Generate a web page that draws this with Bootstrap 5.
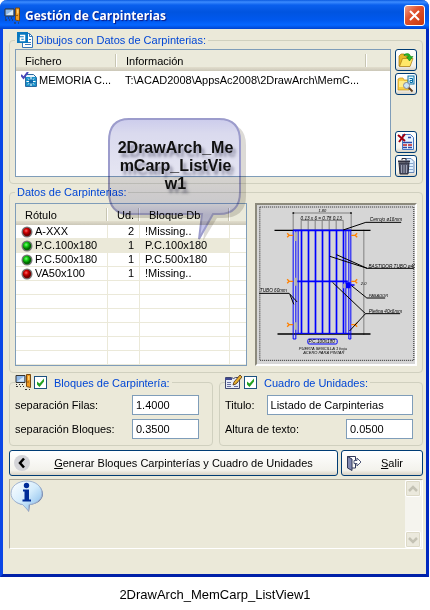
<!DOCTYPE html>
<html lang="es">
<head>
<meta charset="utf-8">
<meta name="viewport" content="width=device-width, initial-scale=1">
<title>Gestión de Carpinterias</title>
<link href="https://cdn.jsdelivr.net/npm/bootstrap@5.3.0/dist/css/bootstrap.min.css" rel="stylesheet">
<style>
  body { font-family: "Liberation Sans", Arial, sans-serif; font-size: 11px; line-height: 14px; color: #000; background: #fff; }
  svg { display: block; flex: none; }
  .win { margin-right: 1px; border: 3px solid #0a46e6; border-top: 0; border-bottom-color: #0020a8; border-right-color: #0028c0; border-radius: 7px 7px 0 0; background: #ebe9d9; }
  .titlebar { height: 29px; margin: 0 -3px; padding: 2px 4px 0 4px; border-radius: 7px 7px 0 0; background: linear-gradient(#0a5ae0 0, #3c8cff 2px, #0a60ee 5px, #0054e0 12px, #0058ee 20px, #0566ff 25px, #0043cf 29px); }
  .titlebar h1 { font: bold 12px/20px "Open Sans", "Noto Sans", sans-serif; color: #fff; text-shadow: 1px 1px 1px #0a1883; }
  .btn-x { width: 21px; height: 21px; padding: 0; border: 1px solid #fff; border-radius: 3px; background: linear-gradient(135deg, #f0a088, #e0522e 40%, #c8380c); }
  .content { padding: 2px 3px 25px 6px; }
  .group { min-width: 0; border: 1px solid #d0d0bf; border-radius: 4px; padding: 0 5px 6px 5px; }
  .group + .group { margin-top: 1px; }
  .group > legend { font-size: 11px; line-height: 14px; color: #0046d5; margin: 0; padding: 0 2px; gap: 3px; }
  .group > .opt { padding-left: 0; gap: 2px; margin-bottom: 4px; }
  .opt label { margin-left: 5px; }
  .group > .plain { margin-bottom: 4px; }
  .list { flex: 1 1 0; min-width: 0; overflow: hidden; border: 1px solid #7f9db9; background: #fff; }
  .list table { width: 100%; table-layout: fixed; border-collapse: separate; border-spacing: 0; }
  .list th { height: 21px; padding: 0 9px; font-weight: normal; background: linear-gradient(#ebeadb 0 17px, #e2decd 17px, #cbc7b8 21px); white-space: nowrap; position: relative; }
  .list th:not(:last-child)::after { content: ""; position: absolute; right: 0; top: 4px; height: 13px; border-left: 1px solid #c7c5b2; border-right: 1px solid #fff; }
  .list td { line-height: 13px; height: 14px; padding: 0 5px; white-space: nowrap; }
  .files { min-height: 128px; }
  .files td { height: 18px; }
  .cell { display: flex; align-items: center; gap: 2px; }
  .grid td { border-bottom: 1px solid #ebe9d9; border-right: 1px solid #ebe9d9; }
  .grid td:last-child { border-right: 0; }
  .grid .picked td:not(:last-child) { background: #ebe9d9; }
  .xp { border: 1px solid #003c74; border-radius: 3px; padding: 0; background: linear-gradient(#fff, #f3f2ec 80%, #d8d2c4); color: #000; height: 26px; }
  .xp.tool { width: 22px; height: 22px; display: flex; align-items: center; justify-content: center; }
  .tools { gap: 2px; padding-right: 0; }
  .salir { width: 82px; }
  .actions { gap: 3px; }
  .field { height: 20px; border: 1px solid #7f9db9; border-radius: 0; padding: 0 3px; line-height: 14px; background: #fff; color: #000; min-width: 0; width: 100%; }
  .field.num { width: 67px; }
  .line { height: 20px; }
  .pairs { --bs-gutter-x: 6px; margin-top: 1px; }
  .pairs > .col { min-width: 0; }
  .tick { appearance: none; width: 13px; height: 13px; margin: 0; border: 1px solid #1c5180; background: #fff; }
  .tick:checked { background: #fff url("data:image/svg+xml,%3Csvg xmlns='http://www.w3.org/2000/svg' viewBox='0 0 11 11'%3E%3Cpath d='M2 4.5v3l2.500 2.500L9 4.500v-3L4.500 6.500z' fill='%2321a121'/%3E%3C/svg%3E"); }
  .preview { border: 2px solid; border-color: #8c8a7c #fff #fff #8c8a7c; background: #d6d6d6; flex: 0 0 162px; height: 163px; }
  .memo { height: 70px; margin-top: 3px; border: 1px solid; border-color: #aca899 #fff #fff #aca899; }
  .scroller { width: 17px; background: #f5f4ee; }
  .scroller button { width: 16px; height: 17px; padding: 0; border: 1px solid #fff; border-radius: 2px; background: #ebe9dd; box-shadow: 0 0 0 1px #dddac8 inset; }
  .balloon { left: 105px; top: 115px; width: 142px; height: 132px; pointer-events: none; mix-blend-mode: multiply; }
  .balloon p { left: 2px; right: 9px; top: 24px; font-size: 16px; line-height: 18px; color: #111; text-shadow: 3px 4px 3px rgba(60,60,90,.5); }
  .caption-line { font-size: 13px; line-height: 16px; margin-top: 10px; }
</style>
</head>
<body>
<svg width="0" height="0" class="position-absolute" aria-hidden="true">
  <defs>
    <radialGradient id="gr" cx=".4" cy=".35"><stop offset="0" stop-color="#f66"/><stop offset=".5" stop-color="#d00000"/><stop offset="1" stop-color="#700"/></radialGradient>
    <radialGradient id="gg" cx=".4" cy=".35"><stop offset="0" stop-color="#7f7"/><stop offset=".5" stop-color="#10c810"/><stop offset="1" stop-color="#060"/></radialGradient>
    <linearGradient id="bal" x1="0" y1="0" x2="0" y2="1"><stop offset="0" stop-color="#ccccec"/><stop offset=".12" stop-color="#dadaee"/><stop offset=".5" stop-color="#e6e6f2"/><stop offset=".7" stop-color="#dcdcf0"/><stop offset=".8" stop-color="#c0c0e4"/><stop offset="1" stop-color="#c8c8f0"/></linearGradient>
    <linearGradient id="bub" x1="0" y1="0" x2="1" y2="1"><stop offset="0" stop-color="#fff"/><stop offset=".5" stop-color="#d4ecfc"/><stop offset="1" stop-color="#7ab4e8"/></linearGradient>
    <symbol id="red" viewBox="0 0 12 12"><circle cx="6" cy="6" r="5.500" fill="#777"/><circle cx="6" cy="6" r="4.200" fill="url(#gr)"/></symbol>
    <symbol id="green" viewBox="0 0 12 12"><circle cx="6" cy="6" r="5.500" fill="#777"/><circle cx="6" cy="6" r="4.200" fill="url(#gg)"/></symbol>
    <symbol id="door" viewBox="0 0 17 17">
      <path d="M1 1.500h9v7H1z" fill="#8fb8e8" stroke="#333"/><path d="M2 7.500l7-5v5z" fill="#d4e8fa"/>
      <path d="M11.500 .5h4v13l-4-1z" fill="#f09a20" stroke="#7a4a10"/><path d="M13 2h1.500v4H13z" fill="#ffd070"/><path d="M12.500 8h1" stroke="#402000"/>
      <path d="M1 10.500h1m2 0h1m2 0h1M1 12.500h2m2 0h1m2 0h1M10 15.500h2m2 0h1" stroke="#333"/>
    </symbol>
  </defs>
</svg>

<main class="win position-relative">
  <header class="titlebar d-flex align-items-center">
    <svg width="17" height="18"><use href="#door"/></svg>
    <h1 class="m-0 ms-1 flex-grow-1 text-nowrap">Gestión de Carpinterias</h1>
    <button type="button" class="btn-x d-flex align-items-center justify-content-center" aria-label="Cerrar">
      <svg width="13" height="13" viewBox="0 0 13 13"><path d="M2 2l9 9M11 2l-9 9" stroke="#fff" stroke-width="2"/></svg>
    </button>
  </header>

  <div class="content">
    <fieldset class="group">
      <legend class="float-none w-auto d-flex align-items-center">
        <svg width="16" height="18" viewBox="0 0 16 18"><path d="M5.500 2.500h7l3 3v11h-10z" fill="#fff" stroke="#3878b8"/><path d="M12.500 2.500v3h3M8 13.500h6M8 11.500h6M12 8.500h2" stroke="#3878b8" fill="none"/><rect x="0" y="1" width="11" height="11" fill="#0878c0"/><path d="M3 4.500h4.500v5H3.500v-2.500H7" fill="none" stroke="#fff" stroke-width="1.500"/></svg>
        <span>Dibujos con Datos de Carpinterias:</span>
      </legend>
      <div class="d-flex gap-1">
        <div class="list files">
          <table>
            <colgroup><col style="width:101px"><col style="width:250px"><col></colgroup>
            <thead><tr><th scope="col">Fichero</th><th scope="col">Información</th><th></th></tr></thead>
            <tbody><tr>
              <td><span class="cell">
                <svg width="16" height="16" viewBox="0 0 16 16"><path d="M4.500 2.500h8l3 3v9h-11z" fill="#e8f4fc" stroke="#2868a0"/><rect x="5" y="5" width="10" height="9" fill="#1890c8"/><path d="M10 5v9M5.500 9.500h9M7 6.500l6 6M13 6.500l-6 6" stroke="#fff"/><rect x="8" y="7.500" width="4" height="4" fill="#1068a8"/><path d="M0 3l2.500 3L7 0" fill="none" stroke="#4848b8" stroke-width="2"/></svg>
                <span>MEMORIA C...</span></span></td>
              <td colspan="2" class="ps-2">T:\ACAD2008\AppsAc2008\2DrawArch\MemC...</td>
            </tr></tbody>
          </table>
        </div>
        <div class="tools d-flex flex-column">
          <button type="button" class="xp tool" aria-label="Abrir">
            <svg width="16" height="16" viewBox="0 0 16 16"><path d="M1 14V4l2-2h3l1 2h5v10z" fill="#e8b828" stroke="#a87810" stroke-width=".7"/><path d="M1.500 14.500l3-8H15l-3 8z" fill="#ffe868" stroke="#a87810" stroke-width=".7"/><path d="M6 2.500c4-2 6-.5 6.500 2H15L11.500 9 8.500 5h2c-.5-1.500-2-2-4.500-1.500z" fill="#28b828" stroke="#087808" stroke-width=".5"/></svg>
          </button>
          <button type="button" class="xp tool" aria-label="Buscar">
            <svg width="18" height="18" viewBox="0 0 18 18"><path d="M1 15V4l2-1h3l1 2h5v10z" fill="#f8d048" stroke="#c89018" stroke-width=".7"/><path d="M2 6h8v6H2z" fill="#ffec88"/><rect x="11" y="1" width="6" height="8" fill="#e8f8ff" stroke="#0870a8"/><path d="M12.500 3.500h3v4h-2.500v-2h2" fill="none" stroke="#0870a8"/><path d="M11.500 12.500l4 4" stroke="#604020" stroke-width="2"/><circle cx="9.500" cy="10.500" r="3" fill="#c8e4f8" stroke="#889"/></svg>
          </button>
          <button type="button" class="xp tool mt-auto" aria-label="Quitar">
            <svg width="18" height="18" viewBox="0 0 18 18"><path d="M5.500 1.500h8l3 3v12h-11z" fill="#e8f4ff" stroke="#4878c0"/><path d="M11 4.500h3M6 9.500h9M6 14.500h4m1 0h4" stroke="#2848a8" stroke-width="1.500"/><path d="M6 12h4m1 0h4" stroke="#c02020" stroke-width="1.500"/><path d="M1 2l7 6M8 1L2 9" stroke="#a00010" stroke-width="2"/></svg>
          </button>
          <button type="button" class="xp tool" aria-label="Vaciar">
            <svg width="18" height="18" viewBox="0 0 18 18"><path d="M9 1.500h5l3 3v11H9z" fill="#e0f0ff" stroke="#6888b8"/><path d="M12 6.500h4M12 9.500h4M12 12.500h4" stroke="#88a8d0"/><path d="M2 6h10l-1 11H3z" fill="#505468" stroke="#282838"/><path d="M4.500 8v8M7 8v8M9.500 8v8" stroke="#a0a4b8"/><path d="M1 4.500h12" stroke="#303040" stroke-width="2"/><path d="M5 3V1.500h4V3" stroke="#303040" fill="none"/></svg>
          </button>
        </div>
      </div>
    </fieldset>

    <fieldset class="group">
      <legend class="plain float-none w-auto">Datos de Carpinterias:</legend>
      <div class="d-flex gap-2">
        <div class="list grid">
          <table>
            <colgroup><col style="width:92px"><col style="width:32px"><col style="width:90px"><col></colgroup>
            <thead><tr><th scope="col">Rótulo</th><th scope="col" class="text-end pe-2">Ud.</th><th scope="col">Bloque Db</th><th></th></tr></thead>
            <tbody>
              <tr><td><span class="cell"><svg width="12" height="12"><use href="#red"/></svg><span>A-XXX</span></span></td><td class="text-end">2</td><td>!Missing..</td><td></td></tr>
              <tr class="picked"><td><span class="cell"><svg width="12" height="12"><use href="#green"/></svg><span>P.C.100x180</span></span></td><td class="text-end">1</td><td>P.C.100x180</td><td></td></tr>
              <tr><td><span class="cell"><svg width="12" height="12"><use href="#green"/></svg><span>P.C.500x180</span></span></td><td class="text-end">1</td><td>P.C.500x180</td><td></td></tr>
              <tr><td><span class="cell"><svg width="12" height="12"><use href="#red"/></svg><span>VA50x100</span></span></td><td class="text-end">1</td><td>!Missing..</td><td></td></tr>
              <tr><td></td><td></td><td></td><td></td></tr>
              <tr><td></td><td></td><td></td><td></td></tr>
              <tr><td></td><td></td><td></td><td></td></tr>
              <tr><td></td><td></td><td></td><td></td></tr>
              <tr><td></td><td></td><td></td><td></td></tr>
              <tr><td></td><td></td><td></td><td></td></tr>
            </tbody>
          </table>
        </div>
        <div class="preview">
          <svg width="100%" height="100%" viewBox="21 16 471 477" font-family="Liberation Sans, sans-serif" font-style="italic" font-size="14">
            <rect x="28" y="22" width="462" height="460" fill="none" stroke="#222" stroke-width="3" stroke-dasharray="3 3"/>
            <path d="M128 92V40h174v50M152 92V62h126v30M173 62v28M194 62v28M215 62v28M236 62v28M257 62v28M340 90v316" fill="none" stroke="#808080" stroke-width="3"/>
            <path d="M72 92h288M81 403h279M126 40h5M299 40h5M336 92h8M336 403h8" stroke="#000" stroke-width="4"/>
            <path d="M128 92v326h8V92M143 92v310M286 92v310M295 92v326h6V92M138 401h160" fill="none" stroke="#00f" stroke-width="3"/>
            <path d="M153 92v310M174 92v310M195 92v310M216 92v310M237 92v310M258 92v310M279 92v310M140 245h152M128 92h174" stroke="#00f" stroke-width="5"/>
            <path d="M136 98v26M136 234v24M136 368v22M282 252v14" stroke="#b0b0b0" stroke-width="8"/>
            <path d="M286 248h14v6h12v4h-12v8h-14z" fill="#00f"/>
            <g fill="none" stroke="#ff8000" stroke-width="4"><path id="an" d="M110 101l6 6-6 6M114 107h14"/><use href="#an" y="138"/><use href="#an" y="268"/><path id="bn" d="M320 101l-6 6 6 6M316 107h-14"/><use href="#bn" y="138"/><use href="#bn" y="268"/></g>
            <path d="M278 91l68-23h106M238 170l112 36h140M258 165l92 41M26 281h90l24 26M118 284l12 30M303 258l46 37h55M246 248l99 94h104M345 342l-48 52" fill="none" stroke="#000" stroke-width="3"/>
            <rect x="172" y="418" width="88" height="15" rx="4" fill="none" stroke="#00f" stroke-width="3"/>
            <text x="204" y="38" font-size="12">1.80</text><text x="150" y="60">0.13 x 6 = 0.78 0.13</text>
            <text x="358" y="65">Cerrojo ø16mm</text><text x="354" y="204">BASTIDOR TUBO ø40</text><text x="28" y="278">TUBO 60mm</text>
            <text x="355" y="292" font-size="12">PASADOR</text><text x="355" y="339">Pletina 40x6mm</text><text x="331" y="256" font-size="12">2.0</text>
            <text x="174" y="431" font-size="14">P.C.100x180</text><text x="145" y="450" font-size="12">PUERTA SENCILLA 1 hoja</text><text x="158" y="462" font-size="12">ACERO PARA PINTAR</text>
          </svg>
        </div>
      </div>
    </fieldset>

    <div class="pairs row mx-0">
      <div class="col ps-0">
        <fieldset class="group">
          <legend class="opt float-none w-auto d-flex align-items-center">
            <svg width="17" height="17"><use href="#door"/></svg>
            <input type="checkbox" class="tick" id="chkBloques" checked>
            <label for="chkBloques">Bloques de Carpintería:</label>
          </legend>
          <div class="line d-flex align-items-center justify-content-between mb-1 pe-1"><label for="filas">separación Filas:</label><input class="field num me-1" id="filas" value="1.4000"></div>
          <div class="line d-flex align-items-center justify-content-between pe-1"><label for="bloques">separación Bloques:</label><input class="field num me-1" id="bloques" value="0.3500"></div>
        </fieldset>
      </div>
      <div class="col pe-0">
        <fieldset class="group">
          <legend class="opt float-none w-auto d-flex align-items-center">
            <svg width="17" height="17" viewBox="0 0 17 17"><path d="M.5 3.500h6l2 1 2-1h4v11h-14z" fill="#e8ecf8" stroke="#404870"/><path d="M0 4h7v2H0z" fill="#404890"/><path d="M2 8.500h4M2 10.500h4M2 12.500h4M9 8.500h4M9 12.500h4" stroke="#6870a0"/><path d="M8 11l1-3 6-7 2 2-6 7z" fill="#e8b030" stroke="#503010" stroke-width=".8"/></svg>
            <input type="checkbox" class="tick" id="chkCuadro" checked>
            <label for="chkCuadro">Cuadro de Unidades:</label>
          </legend>
          <div class="line d-flex align-items-center mb-1 pe-1"><label for="titulo" class="me-2">Titulo:</label><input class="field flex-grow-1 ms-1" id="titulo" value="Listado de Carpinterias"></div>
          <div class="line d-flex align-items-center justify-content-between pe-1"><label for="altura">Altura de texto:</label><input class="field num" id="altura" value="0.0500"></div>
        </fieldset>
      </div>
    </div>

    <div class="actions d-flex mt-1">
      <button type="button" class="xp flex-grow-1 d-flex align-items-center ps-1">
        <svg width="16" height="16" viewBox="0 0 16 16"><circle cx="8" cy="8" r="8" fill="#d4d4d8"/><path d="M10 3.500L6 8l4 4.500" fill="none" stroke="#000" stroke-width="2.500"/></svg>
        <span class="flex-grow-1 text-center"><u>G</u>enerar Bloques Carpinterías y Cuadro de Unidades</span>
      </button>
      <button type="button" class="xp salir d-flex align-items-center ps-1">
        <svg width="16" height="16" viewBox="0 0 16 16"><path d="M1.500 13V1.500h8V5M9.500 9v4H6" fill="#fff" stroke="#303858"/><path d="M1.500 1.500L6 4v11.500L1.500 13z" fill="#8088b0" stroke="#303858"/><path d="M8 5.500h3V3l4 4-4 4V8.500H8z" fill="#fff" stroke="#505878"/></svg>
        <span class="flex-grow-1 text-center"><u>S</u>alir</span>
      </button>
    </div>

    <div class="memo d-flex justify-content-between" role="status">
      <svg width="34" height="34" viewBox="0 0 34 34"><path d="M18 2C9 2 2 7 2 14c0 6 5 10 11 11l6 7 1-7c7-1 13-5 13-11S27 2 18 2z" fill="#667aa8"/><path d="M17 1C8 1 1 6 1 13.500 1 19 6 23.500 12.500 24.500l6 6 .5-6C26 24 32 19.500 32 13.500 32 6 25 1 17 1z" fill="url(#bub)" stroke="#a0b4d0"/><circle cx="16.500" cy="5.500" r="2.700" fill="#002c98"/><path d="M13 9.500h6v10h2v2h-8.500v-2h2v-8H13z" fill="#002c98"/></svg>
      <div class="scroller d-flex flex-column justify-content-between">
        <button type="button" aria-label="Subir" disabled><svg width="14" height="14" viewBox="0 0 14 14"><path d="M3 9l4-4 4 4" fill="none" stroke="#c4c2b4" stroke-width="2.500"/></svg></button>
        <button type="button" aria-label="Bajar" disabled><svg width="14" height="14" viewBox="0 0 14 14"><path d="M3 5l4 4 4-4" fill="none" stroke="#c4c2b4" stroke-width="2.500"/></svg></button>
      </div>
    </div>
  </div>

  <div class="balloon position-absolute">
    <svg width="142" height="132" viewBox="0 0 142 132"><path d="M26 8h88q24 0 24 22v51q0 22-24 22h-5l-14 23 3-23H26Q6 103 6 81V30Q6 8 26 8z" fill="#c4c2ba" opacity=".6"/><path d="M21 4h90q21 0 21 22v51q0 22-21 22h-6l-14 25 3-25H21Q1 99 1 77V26Q1 4 21 4z" fill="url(#bal)" stroke="#9c9ccc" stroke-width="2"/></svg>
    <p class="position-absolute m-0 fw-bold text-center">2DrawArch_Me<br>mCarp_ListVie<br>w1</p>
  </div>
</main>
<p class="caption-line text-center mb-0">2DrawArch_MemCarp_ListView1</p>
<script src="https://cdn.jsdelivr.net/npm/bootstrap@5.3.0/dist/js/bootstrap.bundle.min.js"></script>
</body>
</html>
